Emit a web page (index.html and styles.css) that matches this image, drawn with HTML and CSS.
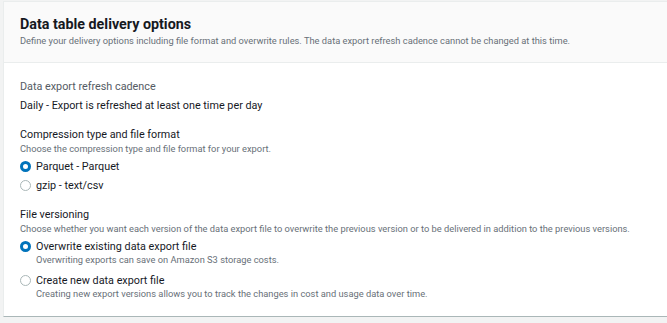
FILE: index.html
```html
<!DOCTYPE html>
<html lang="en">
<head>
    <meta charset="UTF-8">
    <meta name="viewport" content="width=device-width, initial-scale=1.0">
    <title>Data table delivery options</title>
    <link rel="stylesheet" href="styles.css">
</head>
<body>
    <div class="page">
        <section class="card">
            <!-- header -->
            <div class="card-header">
                <h2 class="card-title">Data table delivery options</h2>
                <p class="card-desc">Define your delivery options including file format and overwrite rules. The data export refresh cadence cannot be changed at this time.</p>
            </div>

            <div class="card-body">
                <div class="field">
                    <div class="field-label muted">Data export refresh cadence</div>
                    <div class="field-value">Daily - Export is refreshed at least one time per day</div>
                </div>

                <div class="field">
                    <div class="field-label">Compression type and file format</div>
                    <div class="field-hint">Choose the compression type and file format for your export.</div>
                    <div class="radio-group">
                        <label class="radio">
                            <span class="radio-dot checked"></span>
                            <span class="radio-text">Parquet - Parquet</span>
                        </label>
                        <label class="radio">
                            <span class="radio-dot"></span>
                            <span class="radio-text">gzip - text/csv</span>
                        </label>
                    </div>
                </div>

                <div class="field">
                    <div class="field-label">File versioning</div>
                    <div class="field-hint">Choose whether you want each version of the data export file to overwrite the previous version or to be delivered in addition to the previous versions.</div>
                    <div class="radio-group wide">
                        <label class="radio">
                            <span class="radio-dot checked"></span>
                            <span class="radio-text">Overwrite existing data export file
                                <span class="radio-desc">Overwriting exports can save on Amazon S3 storage costs.</span>
                            </span>
                        </label>
                        <label class="radio">
                            <span class="radio-dot"></span>
                            <span class="radio-text">Create new data export file
                                <span class="radio-desc">Creating new export versions allows you to track the changes in cost and usage data over time.</span>
                            </span>
                        </label>
                    </div>
                </div>
            </div>
        </section>
    </div>
</body>
</html>
```

FILE: styles.css
```css
:root {
    --text-dark: #16191f;
    --text-muted: #545b64;
    --text-hint: #687078;
    --border: #eaeded;
    --blue: #0073bb;
    --page-bg: #f2f3f3;
}

body {
    margin: 0;
    padding: 0;
    background: var(--page-bg);
    font-family: Roboto, "Noto Sans", sans-serif;
    color: var(--text-dark);
    overflow: hidden;
}

.page {
    padding: 1px 0 0 3px;
}

/* card runs off the right edge, as in the console */
.card {
    width: calc(100% + 8px);
    background: #ffffff;
    border: 1px solid var(--border);
    border-bottom: 1px solid #aab7b8;
}

/* header */
.card-header {
    background: #fafafa;
    border-bottom: 1px solid var(--border);
    padding: 13px 16px 15px;
}

.card-title {
    margin: 0;
    font-size: 14.3px;
    line-height: 18px;
    font-weight: 700;
}

.card-desc {
    margin: 2px 0 0;
    font-size: 9.3px;
    line-height: 12px;
    color: var(--text-hint);
}

/* body */
.card-body {
    padding: 16px 16px 16px;
    display: flex;
    flex-direction: column;
    gap: 14px;
}

.field-label {
    font-size: 10.8px;
    line-height: 15px;
}

.field-label.muted {
    color: var(--text-muted);
}

.field-value {
    margin-top: 4px;
    font-size: 10.8px;
    line-height: 15px;
}

.field-hint {
    margin-top: 1px;
    font-size: 9.3px;
    line-height: 12px;
    color: var(--text-hint);
}

.radio-group {
    margin-top: 4px;
    display: flex;
    flex-direction: column;
    gap: 4px;
}

.radio-group.wide {
    gap: 7px;
}

.radio {
    display: flex;
    align-items: flex-start;
    gap: 5px;
    font-size: 10.8px;
    line-height: 15px;
}

.radio-dot {
    box-sizing: border-box;
    flex: none;
    width: 11px;
    height: 11px;
    margin-top: 2px;
    border-radius: 50%;
    border: 1px solid #aab7b8;
    background: #ffffff;
}

.radio-dot.checked {
    border: 3.5px solid var(--blue);
}

.radio-desc {
    display: block;
    font-size: 9.3px;
    line-height: 12px;
    color: var(--text-hint);
}
```
